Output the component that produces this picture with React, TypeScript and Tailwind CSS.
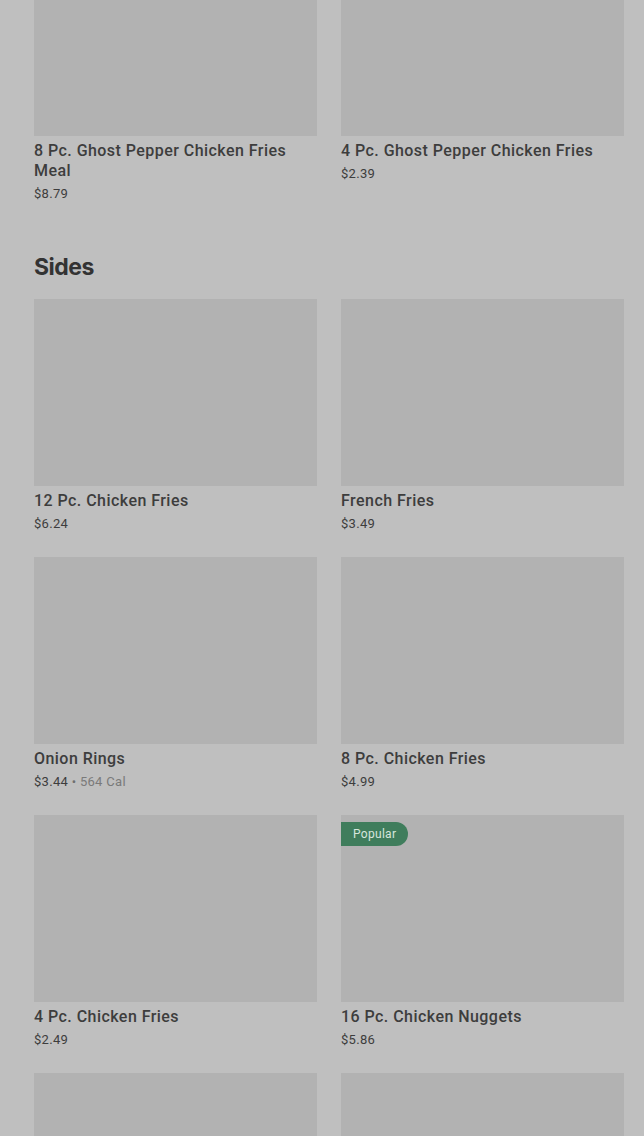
import React from 'react';

interface Item {
  name?: string;
  price?: string;
  cal?: string;
  popular?: boolean;
}

const topItems: Item[] = [
  { name: '8 Pc. Ghost Pepper Chicken Fries Meal', price: '$8.79' },
  { name: '4 Pc. Ghost Pepper Chicken Fries', price: '$2.39' },
];

// last row only peeks in at the bottom edge, no text visible
const sides: Item[] = [
  { name: '12 Pc. Chicken Fries', price: '$6.24' },
  { name: 'French Fries', price: '$3.49' },
  { name: 'Onion Rings', price: '$3.44', cal: '564 Cal' },
  { name: '8 Pc. Chicken Fries', price: '$4.99' },
  { name: '4 Pc. Chicken Fries', price: '$2.49' },
  { name: '16 Pc. Chicken Nuggets', price: '$5.86', popular: true },
  {},
  {},
];

function ItemCard({ item }: { item: Item }) {
  return (
    <div className="flex flex-col">
      <div className="relative h-[187px] bg-[#b2b2b2]">
        {item.popular && (
          <span className="absolute left-0 top-[7px] h-6 pl-3 pr-3 flex items-center rounded-r-full bg-[#3f7d5c] text-[12px] tracking-[0.3px] text-[#d6e6dc]">
            Popular
          </span>
        )}
      </div>
      {item.name && (
        <>
          <p className="mt-[5px] text-[16px] leading-5 font-medium tracking-[0.45px] text-[#3d3d3d]">{item.name}</p>
          <p className="mt-1 text-[13px] leading-[18px] tracking-[0.3px] text-[#3d3d3d]">
            {item.price}
            {item.cal && (
              <>
                <span className="text-[#6f6f6f]"> • </span>
                <span className="text-[#7a7a7a]">{item.cal}</span>
              </>
            )}
          </p>
        </>
      )}
    </div>
  );
}

export default function App() {
  return (
    <div
      className="w-[644px] h-[1136px] overflow-hidden bg-[#bfbfbf] pl-[34px] pr-5"
      style={{ fontFamily: 'Roboto, "Liberation Sans", sans-serif' }}
    >
      <div className="-mt-[51px] grid grid-cols-2 gap-x-6">
        {topItems.map((item, i) => (
          <ItemCard key={i} item={item} />
        ))}
      </div>

      {/* Sides section */}
      <h2
        className="mt-[48px] mb-4 text-[23px] leading-8 font-bold tracking-[-0.5px] text-[#333333]"
        style={{ fontFamily: 'Inter, Roboto, sans-serif' }}
      >
        Sides
      </h2>
      <div className="grid grid-cols-2 gap-x-6 gap-y-6">
        {sides.map((item, i) => (
          <ItemCard key={i} item={item} />
        ))}
      </div>
    </div>
  );
}
